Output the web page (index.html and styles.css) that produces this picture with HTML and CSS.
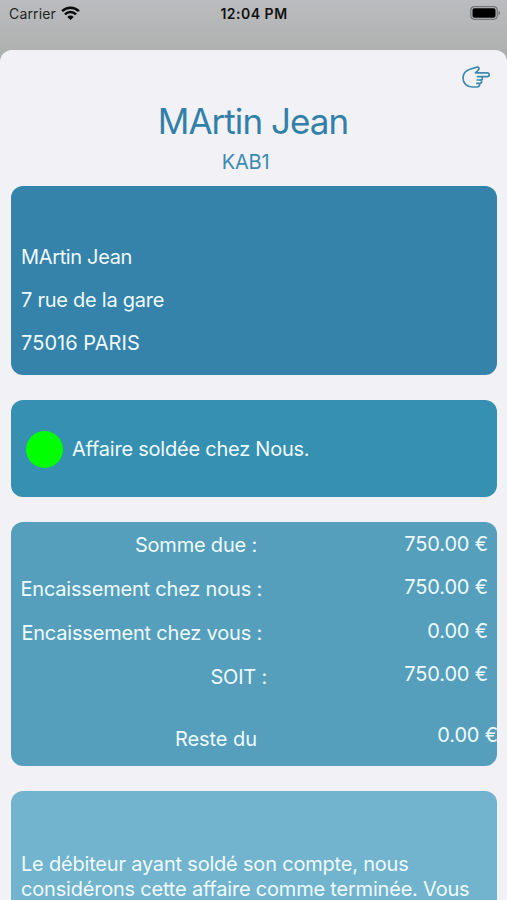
FILE: index.html
```html
<!DOCTYPE html>
<html lang="fr">
<head>
<meta charset="utf-8">
<meta name="viewport" content="width=device-width, initial-scale=1">
<title>MArtin Jean</title>
<link rel="stylesheet" href="styles.css">
</head>
<body>
<header class="status">
  <div class="carrier"><span>Carrier</span>
    <svg class="wifi" width="19" height="14" viewBox="0 0 19 14" fill="none" stroke="#0a0a0a" stroke-width="2.5"><path d="M1.1 5.1a12 12 0 0 1 16.8 0M4 8.3a7.8 7.8 0 0 1 11 0"/><path d="M6.3 10.9a4.5 4.5 0 0 1 6.4 0l-3.2 3.1z" fill="#0a0a0a" stroke="none"/></svg>
  </div>
  <time class="clock">12:04 PM</time>
  <svg class="battery" width="31" height="14" viewBox="0 0 31 14"><rect x=".8" y=".7" width="26.4" height="12.6" rx="3.5" fill="none" stroke="#747576" stroke-width="1.2"/><rect x="2.5" y="2.3" width="23" height="9.4" rx="1.8" fill="#000"/><path d="M28.4 4.7q1.8.7 1.8 2.3t-1.8 2.3z" fill="#747576"/></svg>
</header>
<main class="sheet">
  <div class="toolbar">
    <svg class="hand" width="28" height="22" viewBox="0 0 28 22" fill="none" stroke="#3d8bb0" stroke-width="1.7" stroke-linecap="round" stroke-linejoin="round"><path d="M13.5 6.8H25.3a1.9 1.9 0 0 1 0 3.8H17.5M13.500 6.800L16 4.300C18 2.300 16.700.7 14.200 1.400L8 3.200C3.700 4.600 1 7.700 1 12c0 5.200 3.800 9 9 9h5c3 0 3.500-3.300 1.400-3.600M15.500 10.600h3.200c2.300 0 2.300 3.400 0 3.400h-3.400M18.700 14c1.700.9 1 3.400-.7 3.400h-3.200"/></svg>
  </div>
  <h1 class="title">MArtin Jean</h1>
  <p class="reference">KAB1</p>
  <section class="card address">
    <p class="name">MArtin Jean</p>
    <p class="street">7 rue de la gare</p>
    <p class="city">75016 PARIS</p>
  </section>
  <section class="card state">
    <span class="dot"></span>
    <p class="message">Affaire soldée chez Nous.</p>
  </section>
  <section class="card amounts">
    <div class="labels">
      <p class="due">Somme due :</p>
      <p class="ours">Encaissement chez nous :</p>
      <p class="yours">Encaissement chez vous :</p>
      <p class="total">SOIT :</p>
      <p class="rest">Reste du</p>
    </div>
    <div class="values">
      <p>750.00 €</p>
      <p>750.00 €</p>
      <p>0.00 €</p>
      <p>750.00 €</p>
      <p class="balance">0.00 €</p>
    </div>
  </section>
  <section class="card note">
    <p class="first">Le débiteur ayant soldé son compte, nous</p>
    <p class="second">considérons cette affaire comme terminée. Vous</p>
  </section>
</main>
</body>
</html>
```
FILE: styles.css
```css
* { box-sizing: border-box; }
html, body { margin: 0; height: 100%; overflow: hidden; }
body {
  display: flex;
  flex-direction: column;
  background: linear-gradient(#bbbcbf 0, #afb1b0 50px, #afb1b0 100%);
  font: 400 20px/24px Inter, "Liberation Sans", sans-serif;
  letter-spacing: -0.2px;
  color: #eefaff;
}
h1, p { margin: 0; font-weight: 400; white-space: nowrap; }
.status {
  flex: none;
  display: grid;
  grid-template-columns: 1fr auto 1fr;
  height: 50px;
  padding: 6px 6px 0 9px;
  align-items: start;
  font-size: 14px;
  line-height: 16px;
  letter-spacing: 0.15px;
  color: #111;
}
.carrier { display: flex; gap: 5px; color: #242526; }
.clock { font-weight: 600; letter-spacing: 0.5px; margin-left: -2px; }
.battery { justify-self: end; }
.sheet {
  flex: 1;
  min-height: 0;
  overflow: hidden;
  padding: 0 10px 0 11px;
  background: #f1f1f6;
  border-radius: 12px 12px 0 0;
}
.toolbar { display: flex; justify-content: flex-end; height: 47px; padding: 16px 7px 0 0; }
.title { height: 48px; font-size: 35px; line-height: 48px; letter-spacing: -0.95px; text-align: center; color: #3280a8; padding-right: 2px; }
.reference { height: 41px; line-height: 34px; text-align: center; color: #3d8ab0; padding-right: 17px; }
.card { border-radius: 12px; overflow: hidden; }
.address { height: 189px; background: #3582aa; padding: 59px 10px 0; display: flex; flex-direction: column; gap: 19.2px; }
.name { letter-spacing: -0.35px; }
.street { letter-spacing: -0.25px; }
.city { letter-spacing: 0.05px; }
.state { height: 97px; margin-top: 25px; padding: 1px 15px 0; background: #3690b1; display: flex; align-items: center; gap: 9px; }
.message { letter-spacing: -0.23px; }
.dot { width: 37px; height: 37px; border-radius: 50%; background: #0f0; }
.amounts { height: 244px; margin-top: 25px; background: #559fbd; display: flex; justify-content: space-between; }
.labels { display: flex; flex-direction: column; gap: 20px; width: 256px; padding-top: 11px; align-items: flex-end; }
.values { display: flex; flex-direction: column; gap: 19.3px; padding: 10px 9px 0 0; align-items: flex-end; letter-spacing: -0.15px; }
.due { margin-right: 10px; }
.ours { margin-right: 5px; }
.yours { margin-right: 5px; }
.rest { margin: 18px 10px 0 0; letter-spacing: -0.05px; }
.balance { margin: 18px -10px 0 0; }
.note { height: 244px; margin-top: 25px; padding: 61px 10px 0; background: #72b3cd; line-height: 25px; }
```
